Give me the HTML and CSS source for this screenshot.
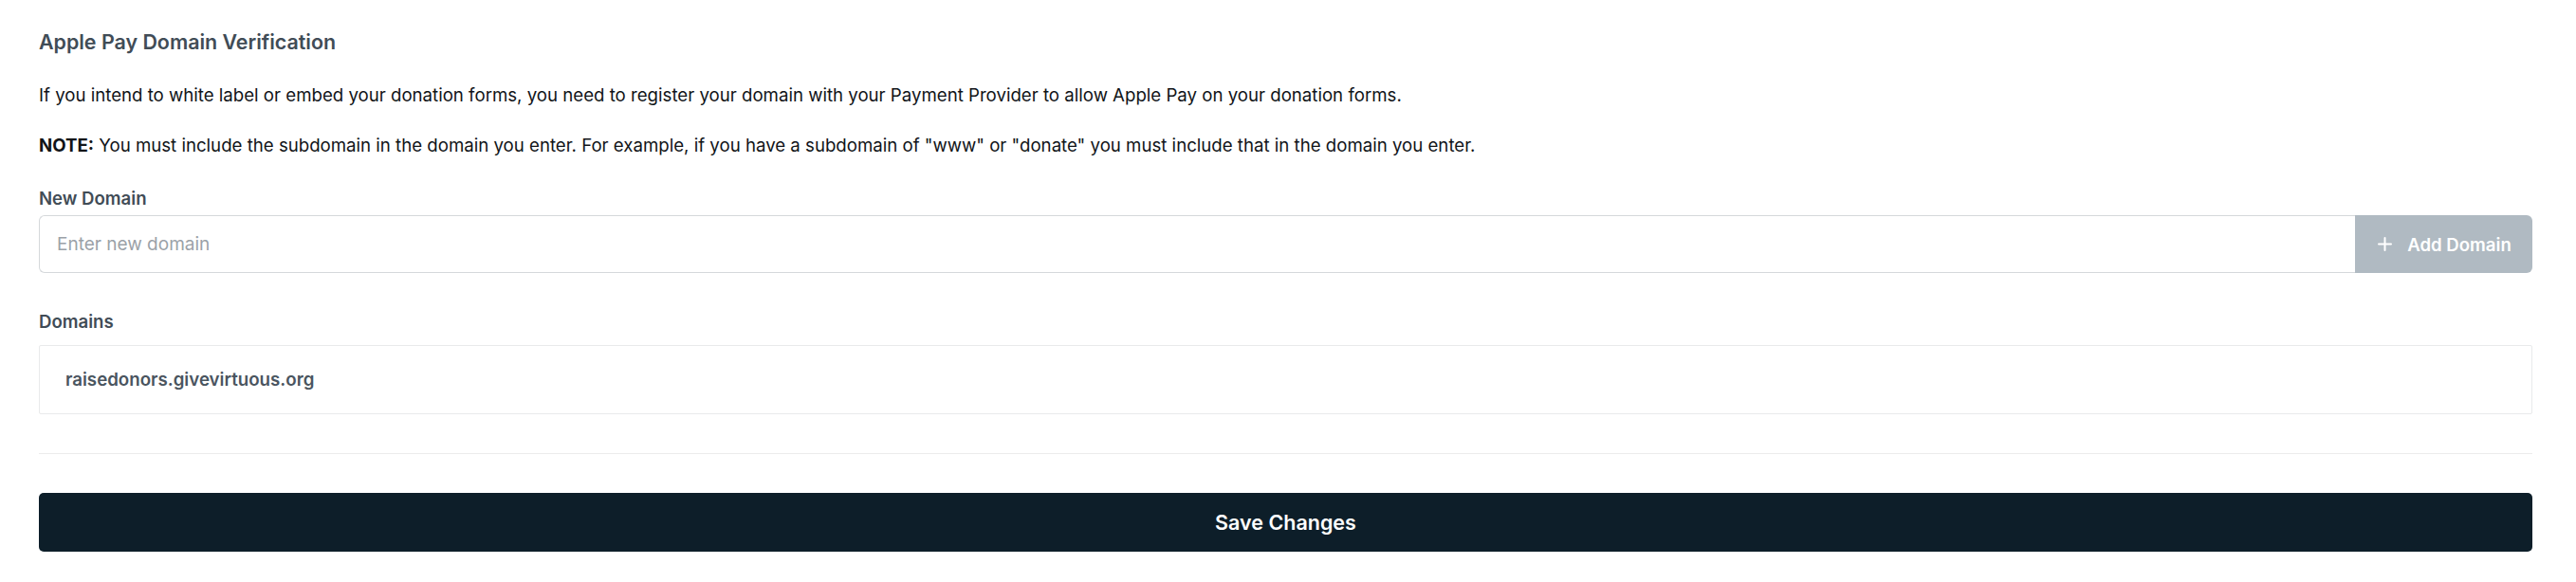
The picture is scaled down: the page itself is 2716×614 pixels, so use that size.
FILE: index.html
```html
<!DOCTYPE html>
<html lang="en">
<head>
<meta charset="utf-8">
<title>Apple Pay Domain Verification</title>
<link rel="stylesheet" href="styles.css">
</head>
<body>
<main class="page">
  <h2 class="title">Apple Pay Domain Verification</h2>
  <p class="text first">If you intend to white label or embed your donation forms, you need to register your domain with your Payment Provider to allow Apple Pay on your donation forms.</p>
  <p class="text second"><strong>NOTE:</strong> You must include the subdomain in the domain you enter. For example, if you have a subdomain of "www" or "donate" you must include that in the domain you enter.</p>

  <label class="label new-label" for="domain">New Domain</label>
  <div class="input-row">
    <input id="domain" class="input" type="text" placeholder="Enter new domain">
    <button class="add-btn" type="button">
      <svg class="plus" width="15" height="15" viewBox="0 0 15 15" aria-hidden="true"><path d="M7.5 1v13M1 7.5h13" stroke="#fff" stroke-width="2" stroke-linecap="round" fill="none"/></svg>
      <span>Add Domain</span>
    </button>
  </div>

  <div class="label domains-label">Domains</div>
  <div class="domain-list">
    <div class="domain-item">raisedonors.givevirtuous.org</div>
  </div>

  <hr class="divider">

  <button class="save-btn" type="button">Save Changes</button>
</main>
</body>
</html>
```

FILE: styles.css
```css
* { box-sizing: border-box; }
html, body { margin: 0; background: #fff; }
body {
  font-family: Inter, "Noto Sans", "Liberation Sans", sans-serif;
  color: #111418;
}
.page {
  padding: 30px 46px 0 41px;
  display: flex;
  flex-direction: column;
}
.title {
  margin: 0;
  font-size: 21.4px;
  line-height: 28px;
  font-weight: 600;
  color: #414c56;
}
.text {
  margin: 0;
  font-size: 18.65px;
  line-height: 28px;
  color: #111418;
}
.text.first { margin-top: 28px; }
.text.second { margin-top: 25px; }
.text strong { font-weight: 700; }
.label {
  font-size: 18.6px;
  line-height: 28px;
  font-weight: 600;
  color: #414c56;
}
.new-label { margin-top: 28px; }
.input-row {
  margin-top: 4px;
  display: flex;
  height: 61px;
}
.input {
  flex: 1;
  min-width: 0;
  height: 61px;
  border: 1px solid #d5d8db;
  border-right: none;
  border-radius: 6px 0 0 6px;
  padding: 0 18px;
  font-family: inherit;
  font-size: 19px;
  color: #111418;
  outline: none;
}
.input::placeholder { color: #9ba2a8; }
.add-btn {
  width: 187px;
  height: 61px;
  border: none;
  border-radius: 0 6px 6px 0;
  background: #b0bac2;
  color: #fff;
  font-family: inherit;
  font-size: 18.6px;
  font-weight: 600;
  display: flex;
  align-items: center;
  justify-content: center;
  gap: 16px;
  padding: 0 0 0 2px;
}
.plus { display: block; }
.domains-label { margin-top: 37px; }
.domain-list {
  margin-top: 11px;
  border: 1px solid #e9eaeb;
  border-radius: 2px;
}
.domain-item {
  height: 71px;
  display: flex;
  align-items: center;
  padding: 0 27px;
  font-size: 18.7px;
  font-weight: 600;
  color: #4a555f;
}
.divider {
  margin: 41px 0 0;
  border: none;
  border-top: 1px solid #ececec;
  height: 0;
}
.save-btn {
  margin-top: 41px;
  height: 62px;
  border: none;
  border-radius: 5px;
  background: #0d1e29;
  color: #fff;
  font-family: inherit;
  font-size: 21.5px;
  font-weight: 600;
  width: 100%;
}
```
